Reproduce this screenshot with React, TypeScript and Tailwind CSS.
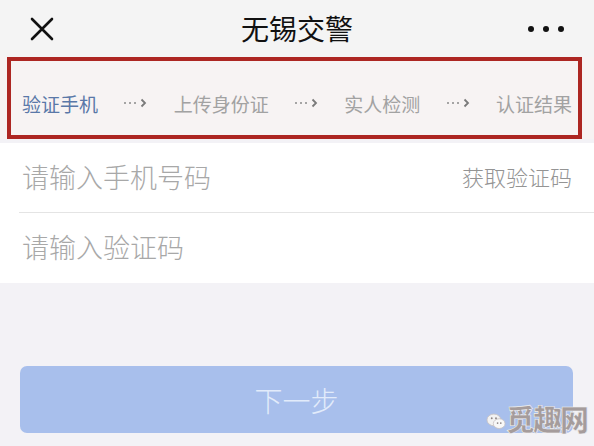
import React from 'react';

const font = { fontFamily: '"Noto Sans CJK SC", "Noto Sans", sans-serif' };

function Arrow() {
  return (
    <span className="flex items-center gap-[3px] text-[#8a8a8a]">
      <span className="w-[2px] h-[2px] rounded-full bg-[#8a8a8a]" />
      <span className="w-[2px] h-[2px] rounded-full bg-[#8a8a8a]" />
      <span className="w-[2px] h-[2px] rounded-full bg-[#8a8a8a]" />
      <svg width="7" height="10" viewBox="0 0 7 10" className="ml-[1px]">
        <path d="M1.5 1.5 L5 5 L1.5 8.5" fill="none" stroke="#7a7a7a" strokeWidth="1.8" />
      </svg>
    </span>
  );
}

export default function App() {
  const steps = ['验证手机', '上传身份证', '实人检测', '认证结果'];

  return (
    <div className="relative w-[594px] h-[446px] overflow-hidden bg-[#f3f2f6]" style={font}>
      {/* nav bar */}
      <div className="grid grid-cols-[1fr_auto_1fr] items-center h-[57px] bg-[#f4f4f4] px-[30px]">
        <svg width="24" height="24" viewBox="0 0 24 24">
          <path d="M2 2 L22 22 M22 2 L2 22" stroke="#111" strokeWidth="2.6" strokeLinecap="round" />
        </svg>
        <h1 className="text-[28px] text-[#111] leading-none pb-[2px]">无锡交警</h1>
        <div className="flex justify-end gap-[9px]">
          <span className="w-[6px] h-[6px] rounded-full bg-[#111]" />
          <span className="w-[6px] h-[6px] rounded-full bg-[#111]" />
          <span className="w-[6px] h-[6px] rounded-full bg-[#111]" />
        </div>
      </div>

      {/* steps */}
      <div className="bg-[#f7f3f3]">
        <div className="ml-[7px] mr-[12px] h-[82px] border-[4px] border-[#ad2622] flex items-center justify-between pl-[11px] pr-[6px] pt-[10px]">
          {steps.map((s, i) => (
            <React.Fragment key={s}>
              <span className={`text-[19px] leading-none ${i === 0 ? 'text-[#5a78a8]' : 'text-[#a2a2a2]'}`}>{s}</span>
              {i < steps.length - 1 && <Arrow />}
            </React.Fragment>
          ))}
        </div>
      </div>

      {/* form */}
      <div className="mt-[4px] bg-white">
        <div className="flex items-center justify-between h-[69px] pl-[22px] pr-[22px] pb-[3px]">
          <span className="text-[27px] font-light text-[#a8a8a8] leading-none">请输入手机号码</span>
          <span className="text-[22px] font-light text-[#949494] leading-none">获取验证码</span>
        </div>
        <div className="ml-[19px] h-px bg-[#e4e4e4]" />
        <div className="flex items-center h-[70px] pl-[22px] pb-[3px]">
          <span className="text-[27px] font-light text-[#a8a8a8] leading-none">请输入验证码</span>
        </div>
      </div>

      {/* button */}
      <div className="px-[20px] pt-[83px]">
        <button className="w-[553px] h-[67px] rounded-[7px] bg-[#a8bfec] text-[#e2ebfa] text-[28px] font-light leading-none">
          下一步
        </button>
      </div>

      {/* watermark */}
      <div className="absolute left-[486px] top-[404px] flex items-center">
        <svg width="20" height="17" viewBox="0 0 18 16" className="mt-[6px]">
          <ellipse cx="7" cy="6.5" rx="6.5" ry="5.5" fill="#f2f2f2" stroke="#c9c3c3" strokeWidth="0.8" />
          <ellipse cx="12" cy="10" rx="5.5" ry="4.6" fill="#f8f8f8" stroke="#c9c3c3" strokeWidth="0.8" />
          <circle cx="5" cy="5" r="0.9" fill="#8d8585" />
          <circle cx="9" cy="5" r="0.9" fill="#8d8585" />
          <circle cx="10.5" cy="9.5" r="0.8" fill="#8d8585" />
          <circle cx="13.5" cy="9.5" r="0.8" fill="#8d8585" />
        </svg>
        <span
          className="text-[29px] font-black leading-none text-[#a59c9c] tracking-[-2px]"
          style={{ WebkitTextStroke: '0.6px #f0f0f0' }}
        >
          觅趣网
        </span>
      </div>
    </div>
  );
}
